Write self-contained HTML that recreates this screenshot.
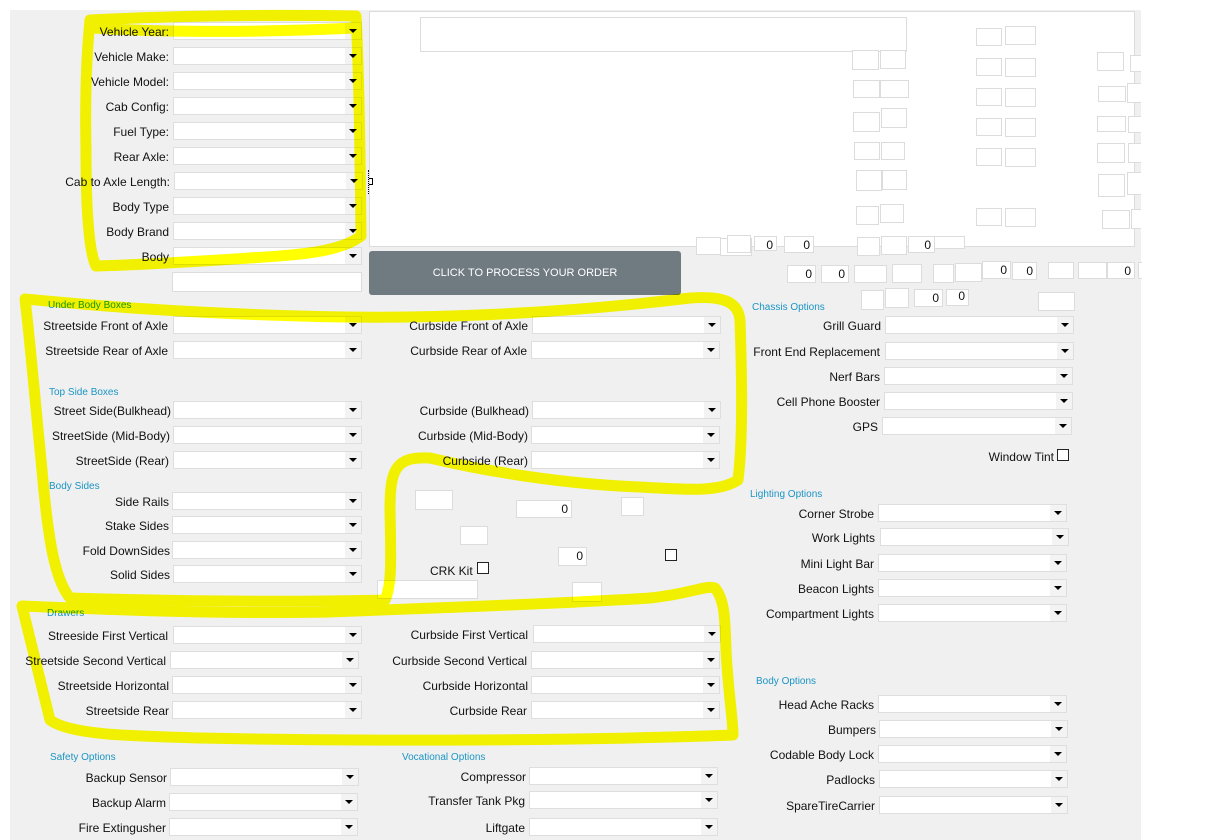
<!DOCTYPE html>
<html><head><meta charset="utf-8">
<style>
html,body{margin:0;padding:0;}
body{width:1207px;height:840px;position:relative;overflow:hidden;background:#fff;font-family:"Liberation Sans",Arial,sans-serif;font-size:12px;color:#111;}
#bg{position:absolute;left:10px;top:10px;width:1131px;height:830px;background:#f0f0f0;}
#panel{position:absolute;left:369px;top:11px;width:764px;height:234px;background:#fff;border:1px solid #dcdcdc;}
.s{position:absolute;height:18px;background:#fff;border:1px solid #dedede;box-sizing:border-box;}
.s::before{content:"";position:absolute;right:0;top:0;width:16px;height:100%;background:#f3f3f3;}
.s::after{content:"";position:absolute;right:4px;top:6px;border-left:4px solid transparent;border-right:4px solid transparent;border-top:4px solid #000;}
.l{position:absolute;white-space:nowrap;text-align:right;line-height:14px;transform:translateY(1px);}
.h{position:absolute;font-size:10px;color:#1b95c4;white-space:nowrap;}
.g{color:#1b95c4;}
.b{position:absolute;background:#fff;border:1px solid #dcdcdc;box-sizing:border-box;font-size:12px;text-align:right;padding-right:3px;line-height:16px;}
.c{position:absolute;width:12px;height:12px;border:1px solid #222;box-sizing:border-box;background:#fff;}
#btn{position:absolute;left:369px;top:251px;width:312px;height:44px;background:#6f7a81;border-radius:3px;color:#fff;text-align:center;line-height:44px;font-size:11px;}
svg{position:absolute;left:0;top:0;}
</style></head><body>
<div id="bg"></div>
<div id="panel"></div>
<div class="b" style="left:420px;top:17px;width:487px;height:35px"></div>

<!-- top group -->
<div class="l" style="right:1038px;top:24px">Vehicle Year:</div><div class="s" style="left:173px;top:22px;width:189px"></div>
<div class="l" style="right:1038px;top:49px">Vehicle Make:</div><div class="s" style="left:173px;top:47px;width:189px"></div>
<div class="l" style="right:1038px;top:74px">Vehicle Model:</div><div class="s" style="left:173px;top:72px;width:189px"></div>
<div class="l" style="right:1038px;top:99px">Cab Config:</div><div class="s" style="left:173px;top:97px;width:189px"></div>
<div class="l" style="right:1038px;top:124px">Fuel Type:</div><div class="s" style="left:173px;top:122px;width:189px"></div>
<div class="l" style="right:1038px;top:149px">Rear Axle:</div><div class="s" style="left:173px;top:147px;width:189px"></div>
<div class="l" style="right:1037px;top:174px">Cab to Axle Length:</div><div class="s" style="left:174px;top:172px;width:189px"></div>
<div class="l" style="right:1038px;top:199px">Body Type</div><div class="s" style="left:173px;top:197px;width:189px"></div>
<div class="l" style="right:1038px;top:224px">Body Brand</div><div class="s" style="left:173px;top:222px;width:189px"></div>
<div class="l" style="right:1038px;top:249px">Body</div><div class="s" style="left:173px;top:247px;width:189px"></div>
<div class="b" style="left:172px;top:272px;width:190px;height:20px"></div>
<div style="position:absolute;left:368px;top:170px;width:4px;height:24px;border-left:1px dotted #000"></div>
<div style="position:absolute;left:369px;top:178px;width:3px;height:5px;border:1px solid #000;border-left:none"></div>

<div id="btn">CLICK TO PROCESS YOUR ORDER</div>

<!-- panel boxes -->
<div class="b" style="left:852px;top:50px;width:27px;height:20px"></div><div class="b" style="left:880px;top:50px;width:26px;height:19px"></div>
<div class="b" style="left:853px;top:80px;width:27px;height:18px"></div><div class="b" style="left:880px;top:80px;width:29px;height:18px"></div>
<div class="b" style="left:853px;top:112px;width:27px;height:20px"></div><div class="b" style="left:881px;top:108px;width:26px;height:20px"></div>
<div class="b" style="left:854px;top:142px;width:26px;height:18px"></div><div class="b" style="left:881px;top:142px;width:24px;height:18px"></div>
<div class="b" style="left:856px;top:170px;width:26px;height:21px"></div><div class="b" style="left:882px;top:170px;width:25px;height:20px"></div>
<div class="b" style="left:856px;top:206px;width:23px;height:19px"></div><div class="b" style="left:880px;top:204px;width:24px;height:19px"></div>
<div class="b" style="left:857px;top:237px;width:23px;height:19px"></div><div class="b" style="left:881px;top:236px;width:26px;height:19px"></div>
<div class="b" style="left:976px;top:28px;width:26px;height:18px"></div><div class="b" style="left:1005px;top:26px;width:31px;height:19px"></div>
<div class="b" style="left:976px;top:58px;width:26px;height:18px"></div><div class="b" style="left:1005px;top:58px;width:31px;height:19px"></div>
<div class="b" style="left:976px;top:88px;width:26px;height:18px"></div><div class="b" style="left:1005px;top:88px;width:31px;height:19px"></div>
<div class="b" style="left:976px;top:118px;width:26px;height:18px"></div><div class="b" style="left:1005px;top:118px;width:31px;height:19px"></div>
<div class="b" style="left:976px;top:148px;width:26px;height:18px"></div><div class="b" style="left:1005px;top:148px;width:31px;height:19px"></div>
<div class="b" style="left:976px;top:208px;width:26px;height:18px"></div><div class="b" style="left:1005px;top:208px;width:31px;height:19px"></div>
<div class="b" style="left:1097px;top:52px;width:27px;height:19px"></div><div class="b" style="left:1130px;top:55px;width:11px;height:17px;border-right:none"></div>
<div class="b" style="left:1098px;top:86px;width:28px;height:16px"></div><div class="b" style="left:1127px;top:83px;width:14px;height:20px;border-right:none"></div>
<div class="b" style="left:1097px;top:116px;width:29px;height:16px"></div><div class="b" style="left:1128px;top:116px;width:13px;height:17px;border-right:none"></div>
<div class="b" style="left:1097px;top:143px;width:28px;height:20px"></div><div class="b" style="left:1128px;top:143px;width:13px;height:20px;border-right:none"></div>
<div class="b" style="left:1098px;top:174px;width:27px;height:23px"></div><div class="b" style="left:1127px;top:172px;width:14px;height:23px;border-right:none"></div>
<div class="b" style="left:1102px;top:210px;width:28px;height:19px"></div><div class="b" style="left:1131px;top:209px;width:10px;height:20px;border-right:none"></div>
<!-- row 237 -->
<div class="b" style="left:720px;top:238px;width:32px;height:18px"></div>
<div class="b" style="left:754px;top:236px;width:23px;height:15px;">0</div>
<div class="b" style="left:784px;top:236px;width:30px;height:17px">0</div>
<div class="b" style="left:908px;top:236px;width:27px;height:17px">0</div>
<div class="b" style="left:934px;top:236px;width:31px;height:13px"></div>
<div class="b" style="left:696px;top:237px;width:25px;height:18px"></div>
<div class="b" style="left:727px;top:235px;width:24px;height:18px"></div>
<!-- row 265 -->
<div class="b" style="left:787px;top:265px;width:29px;height:18px">0</div>
<div class="b" style="left:821px;top:265px;width:28px;height:18px">0</div>
<div class="b" style="left:854px;top:265px;width:33px;height:18px"></div>
<div class="b" style="left:892px;top:264px;width:30px;height:19px"></div>
<div class="b" style="left:933px;top:264px;width:21px;height:19px"></div>
<div class="b" style="left:955px;top:263px;width:27px;height:19px"></div>
<div class="b" style="left:982px;top:261px;width:29px;height:18px">0</div>
<div class="b" style="left:1012px;top:262px;width:25px;height:18px">0</div>
<div class="b" style="left:1048px;top:262px;width:26px;height:17px"></div>
<div class="b" style="left:1078px;top:262px;width:29px;height:17px"></div>
<div class="b" style="left:1107px;top:262px;width:28px;height:17px">0</div>
<div class="b" style="left:1138px;top:262px;width:3px;height:17px;border-right:none"></div>
<!-- row 289 -->
<div class="b" style="left:861px;top:290px;width:23px;height:20px"></div>
<div class="b" style="left:885px;top:288px;width:24px;height:20px"></div>
<div class="b" style="left:914px;top:289px;width:29px;height:18px">0</div>
<div class="b" style="left:946px;top:289px;width:23px;height:17px;line-height:12px">0</div>
<div class="b" style="left:1038px;top:292px;width:37px;height:19px"></div>

<!-- Under Body -->
<div class="h g" style="left:48px;top:300px">Under Body Boxes</div>
<div class="l" style="right:1039px;top:318px">Streetside Front of Axle</div><div class="s" style="left:173px;top:316px;width:189px"></div>
<div class="l" style="right:1039px;top:343px">Streetside Rear of Axle</div><div class="s" style="left:173px;top:341px;width:189px"></div>
<div class="l" style="right:679px;top:318px">Curbside Front of Axle</div><div class="s" style="left:532px;top:316px;width:189px"></div>
<div class="l" style="right:680px;top:343px">Curbside Rear of Axle</div><div class="s" style="left:531px;top:341px;width:189px"></div>

<div class="h" style="left:49px;top:387px">Top Side Boxes</div>
<div class="l" style="right:1036px;top:403px">Street Side(Bulkhead)</div><div class="s" style="left:173px;top:401px;width:189px"></div>
<div class="l" style="right:1037px;top:428px">StreetSide (Mid-Body)</div><div class="s" style="left:173px;top:426px;width:189px"></div>
<div class="l" style="right:1038px;top:453px">StreetSide (Rear)</div><div class="s" style="left:173px;top:451px;width:189px"></div>
<div class="l" style="right:678px;top:403px">Curbside (Bulkhead)</div><div class="s" style="left:532px;top:401px;width:189px"></div>
<div class="l" style="right:679px;top:428px">Curbside (Mid-Body)</div><div class="s" style="left:531px;top:426px;width:189px"></div>
<div class="l" style="right:679px;top:453px">Curbside (Rear)</div><div class="s" style="left:531px;top:451px;width:189px"></div>

<div class="h" style="left:49px;top:481px">Body Sides</div>
<div class="l" style="right:1038px;top:494px">Side Rails</div><div class="s" style="left:172px;top:492px;width:190px"></div>
<div class="l" style="right:1038px;top:518px">Stake Sides</div><div class="s" style="left:172px;top:516px;width:190px"></div>
<div class="l" style="right:1037px;top:543px">Fold DownSides</div><div class="s" style="left:172px;top:541px;width:190px"></div>
<div class="l" style="right:1037px;top:567px">Solid Sides</div><div class="s" style="left:173px;top:565px;width:189px"></div>

<div class="b" style="left:415px;top:490px;width:38px;height:20px"></div>
<div class="b" style="left:516px;top:500px;width:56px;height:18px">0</div>
<div class="b" style="left:621px;top:497px;width:23px;height:19px"></div>
<div class="b" style="left:460px;top:526px;width:28px;height:19px"></div>
<div class="b" style="left:558px;top:547px;width:29px;height:19px">0</div>
<div class="c" style="left:665px;top:549px"></div>
<div class="l" style="left:430px;top:563px">CRK Kit</div><div class="c" style="left:477px;top:562px"></div>
<div class="b" style="left:377px;top:580px;width:101px;height:19px"></div>
<div class="b" style="left:572px;top:582px;width:30px;height:20px"></div>

<!-- Drawers -->
<div class="h g" style="left:47px;top:608px">Drawers</div>
<div class="l" style="right:1039px;top:628px">Streeside First Vertical</div><div class="s" style="left:173px;top:626px;width:189px"></div>
<div class="l" style="right:1041px;top:653px">Streetside Second Vertical</div><div class="s" style="left:170px;top:651px;width:189px"></div>
<div class="l" style="right:1038px;top:678px">Streetside Horizontal</div><div class="s" style="left:172px;top:676px;width:190px"></div>
<div class="l" style="right:1038px;top:703px">Streetside Rear</div><div class="s" style="left:172px;top:701px;width:190px"></div>
<div class="l" style="right:679px;top:627px">Curbside First Vertical</div><div class="s" style="left:533px;top:625px;width:188px"></div>
<div class="l" style="right:680px;top:653px">Curbside Second Vertical</div><div class="s" style="left:531px;top:651px;width:189px"></div>
<div class="l" style="right:679px;top:678px">Curbside Horizontal</div><div class="s" style="left:531px;top:676px;width:189px"></div>
<div class="l" style="right:680px;top:703px">Curbside Rear</div><div class="s" style="left:531px;top:701px;width:189px"></div>

<!-- Safety / Vocational -->
<div class="h" style="left:50px;top:752px">Safety Options</div>
<div class="l" style="right:1040px;top:770px">Backup Sensor</div><div class="s" style="left:170px;top:768px;width:189px"></div>
<div class="l" style="right:1041px;top:795px">Backup Alarm</div><div class="s" style="left:169px;top:793px;width:189px"></div>
<div class="l" style="right:1041px;top:820px">Fire Extingusher</div><div class="s" style="left:169px;top:818px;width:189px"></div>
<div class="h" style="left:402px;top:752px">Vocational Options</div>
<div class="l" style="right:681px;top:769px">Compressor</div><div class="s" style="left:529px;top:767px;width:189px"></div>
<div class="l" style="right:682px;top:793px">Transfer Tank Pkg</div><div class="s" style="left:529px;top:791px;width:189px"></div>
<div class="l" style="right:682px;top:820px">Liftgate</div><div class="s" style="left:529px;top:818px;width:189px"></div>

<!-- Chassis -->
<div class="h" style="left:752px;top:302px">Chassis Options</div>
<div class="l" style="right:326px;top:318px">Grill Guard</div><div class="s" style="left:885px;top:316px;width:189px"></div>
<div class="l" style="right:327px;top:344px">Front End Replacement</div><div class="s" style="left:885px;top:342px;width:189px"></div>
<div class="l" style="right:327px;top:369px">Nerf Bars</div><div class="s" style="left:884px;top:367px;width:189px"></div>
<div class="l" style="right:327px;top:394px">Cell Phone Booster</div><div class="s" style="left:884px;top:392px;width:189px"></div>
<div class="l" style="right:329px;top:419px">GPS</div><div class="s" style="left:882px;top:417px;width:190px"></div>
<div class="l" style="right:153px;top:449px">Window Tint</div><div class="c" style="left:1057px;top:449px"></div>

<div class="h" style="left:750px;top:489px">Lighting Options</div>
<div class="l" style="right:333px;top:506px">Corner Strobe</div><div class="s" style="left:878px;top:504px;width:189px"></div>
<div class="l" style="right:332px;top:530px">Work Lights</div><div class="s" style="left:880px;top:528px;width:189px"></div>
<div class="l" style="right:333px;top:556px">Mini Light Bar</div><div class="s" style="left:878px;top:554px;width:189px"></div>
<div class="l" style="right:333px;top:581px">Beacon Lights</div><div class="s" style="left:878px;top:579px;width:189px"></div>
<div class="l" style="right:333px;top:606px">Compartment Lights</div><div class="s" style="left:878px;top:604px;width:189px"></div>

<div class="h" style="left:756px;top:676px">Body Options</div>
<div class="l" style="right:333px;top:697px">Head Ache Racks</div><div class="s" style="left:878px;top:695px;width:189px"></div>
<div class="l" style="right:331px;top:722px">Bumpers</div><div class="s" style="left:879px;top:720px;width:189px"></div>
<div class="l" style="right:333px;top:747px">Codable Body Lock</div><div class="s" style="left:878px;top:745px;width:189px"></div>
<div class="l" style="right:332px;top:772px">Padlocks</div><div class="s" style="left:879px;top:770px;width:189px"></div>
<div class="l" style="right:332px;top:798px">SpareTireCarrier</div><div class="s" style="left:879px;top:796px;width:189px"></div>

<!-- yellow highlights -->
<svg width="1207" height="840" viewBox="0 0 1207 840" style="mix-blend-mode:multiply">
<g fill="none" stroke="#ffff00" stroke-width="11" stroke-linejoin="round" stroke-linecap="round">
<path d="M90,20 C150,17 250,14 356,16 C359,70 360,150 361,236 C340,252 300,255 250,258 C190,262 130,265 96,266 C88,250 86,200 86,150 C85,100 86,60 90,20 Z"/>
<path d="M93,28 C170,33 270,32 355,28"/>
<path d="M25,299 C80,304 160,312 300,316 C420,320 560,314 690,298 C720,296 738,300 740,320 C742,380 743,440 738,480 C720,492 690,490 640,487 C560,484 480,470 430,458 C395,456 390,470 390,510 C391,560 392,585 385,600 C300,602 200,602 70,598 C55,580 48,540 42,470 C35,400 30,340 25,299 Z"/>
<path d="M22,606 C120,610 220,614 330,612 C430,608 560,604 650,598 C690,594 705,585 715,588 C725,600 725,620 726,650 C728,690 733,720 733,735 C600,740 400,742 200,738 C130,736 70,735 50,720 C45,700 35,660 22,606 Z"/>
</g>
</svg>
</body></html>
